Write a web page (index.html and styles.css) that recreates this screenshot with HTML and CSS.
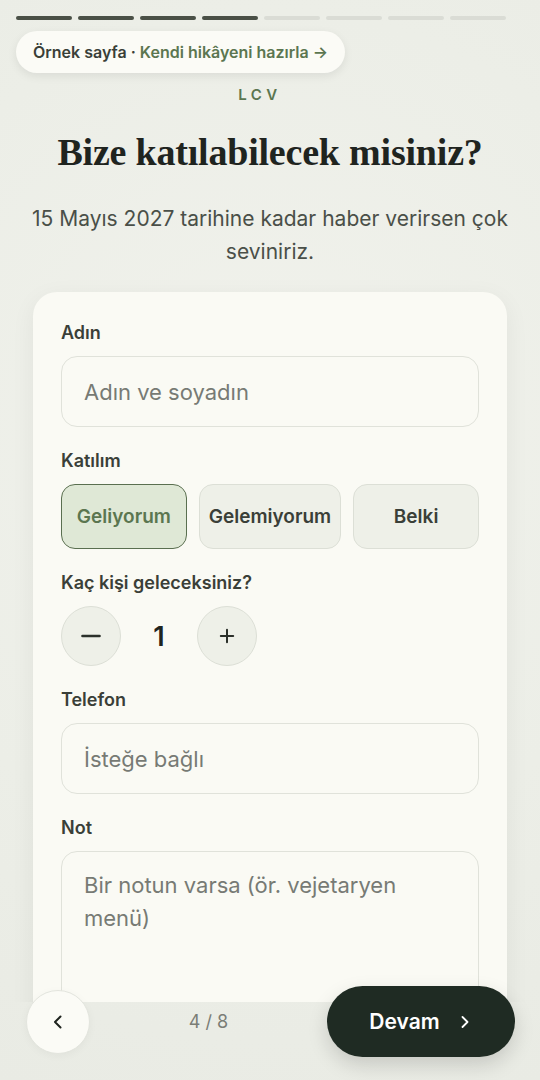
FILE: index.html
```html
<!DOCTYPE html>
<html lang="tr">
<head>
    <meta charset="UTF-8">
    <meta name="viewport" content="width=device-width, initial-scale=1.0">
    <title>LCV</title>
    <link rel="stylesheet" href="styles.css">
</head>
<body>
    <div class="screen">
        <div class="scroll">
            <div class="progress">
                <span class="seg done"></span>
                <span class="seg done"></span>
                <span class="seg done"></span>
                <span class="seg done"></span>
                <span class="seg"></span>
                <span class="seg"></span>
                <span class="seg"></span>
                <span class="seg"></span>
            </div>

            <div class="pill-row">
                <a class="pill" href="#">Örnek sayfa · <span class="pill-link">Kendi hikâyeni hazırla →</span></a>
            </div>

            <div class="eyebrow">LCV</div>
            <h1>Bize katılabilecek misiniz?</h1>
            <p class="lead">15 Mayıs 2027 tarihine kadar haber verirsen çok seviniriz.</p>

            <form class="card">
                <div class="field">
                    <label for="name">Adın</label>
                    <input type="text" id="name" placeholder="Adın ve soyadın">
                </div>

                <div class="field">
                    <label>Katılım</label>
                    <div class="choices">
                        <button type="button" class="choice selected">Geliyorum</button>
                        <button type="button" class="choice">Gelemiyorum</button>
                        <button type="button" class="choice">Belki</button>
                    </div>
                </div>

                <div class="field">
                    <label>Kaç kişi geleceksiniz?</label>
                    <div class="stepper">
                        <button type="button" class="step">
                            <svg width="20" height="20" viewBox="0 0 20 20"><path d="M1.5 10h17" stroke="#2b302a" stroke-width="2.6" stroke-linecap="round"/></svg>
                        </button>
                        <span class="count">1</span>
                        <button type="button" class="step">
                            <svg width="16" height="16" viewBox="0 0 16 16"><path d="M8 1.8v12.4M1.8 8h12.4" stroke="#2b302a" stroke-width="2" stroke-linecap="round"/></svg>
                        </button>
                    </div>
                </div>

                <div class="field">
                    <label for="phone">Telefon</label>
                    <input type="tel" id="phone" placeholder="İsteğe bağlı">
                </div>

                <div class="field">
                    <label for="note">Not</label>
                    <textarea id="note" rows="5" placeholder="Bir notun varsa (ör. vejetaryen menü)"></textarea>
                </div>
            </form>
        </div>

        <!-- bottom nav floats over the form -->
        <div class="nav">
            <button type="button" class="back">
                <svg width="18" height="18" viewBox="0 0 18 18"><path d="M11.5 3.5L6 9l5.5 5.5" fill="none" stroke="#1e231f" stroke-width="2" stroke-linecap="round" stroke-linejoin="round"/></svg>
            </button>
            <span class="pager">4 / 8</span>
            <button type="button" class="next">
                Devam
                <svg width="16" height="16" viewBox="0 0 16 16"><path d="M5.5 3l5 5-5 5" fill="none" stroke="#ffffff" stroke-width="1.8" stroke-linecap="round" stroke-linejoin="round"/></svg>
            </button>
        </div>
    </div>
</body>
</html>
```

FILE: styles.css
```css
body {
    margin: 0;
    font-family: Inter, "Noto Sans", sans-serif;
    background-color: #eceee7;
    color: #2b302a;
}
.screen {
    position: relative;
    width: 540px;
    height: 1080px;
    overflow: hidden;
    background: radial-gradient(circle at 50% 40%, #f1f2ec 0%, #eceee7 60%, #e9ebe4 100%);
}
.scroll {
    height: 1002px;
    overflow: hidden;
}
.progress {
    display: flex;
    gap: 6px;
    padding: 16px 34px 0 16px;
}
.seg {
    flex: 1;
    height: 4px;
    border-radius: 2px;
    background-color: #dadcd5;
}
.seg.done {
    background-color: #4a5046;
}
.pill-row {
    padding: 11px 16px 0;
}
.pill {
    display: inline-block;
    padding: 0 17px;
    height: 42px;
    line-height: 42px;
    border-radius: 21px;
    background-color: #fbfbf6;
    box-shadow: 0 3px 10px rgba(0,0,0,0.08);
    font-size: 16px;
    font-weight: 600;
    color: #3a3f38;
    text-decoration: none;
}
.pill-link {
    color: #5b7650;
}
.eyebrow {
    margin-top: 12px;
    padding-right: 20px;
    text-align: center;
    font-size: 15px;
    font-weight: 600;
    letter-spacing: 0.3em;
    color: #5b7650;
}
h1 {
    margin: 24px 0 0;
    text-align: center;
    font-family: "Liberation Serif", "DejaVu Serif", serif;
    font-size: 38px;
    font-weight: bold;
    line-height: 48px;
    color: #1f241f;
    letter-spacing: -0.2px;
}
.lead {
    margin: 26px 30px 0;
    text-align: center;
    font-size: 21px;
    line-height: 33px;
    color: #4a4f48;
}
.card {
    margin: 24px 33px 0;
    padding: 29px 28px 40px;
    background-color: #fafaf4;
    border-radius: 24px;
    box-shadow: 0 6px 24px rgba(0,0,0,0.06);
}
.field {
    margin-bottom: 22px;
}
label {
    display: block;
    margin-bottom: 11px;
    font-size: 18px;
    font-weight: 600;
    line-height: 24px;
    color: #3a3f38;
}
input, textarea {
    display: block;
    width: 100%;
    box-sizing: border-box;
    padding: 0 22px;
    height: 71px;
    border: 1px solid #e0e2da;
    border-radius: 16px;
    background-color: #fafaf4;
    font-family: inherit;
    font-size: 22px;
    color: #2b302a;
}
textarea {
    height: 180px;
    padding: 17px 22px;
    line-height: 33px;
    resize: none;
}
input::placeholder, textarea::placeholder {
    color: #777a74;
}
.choices {
    display: flex;
    gap: 12px;
}
.choice {
    flex: 1 1 0;
    height: 65px;
    padding: 0 9px;
    border: 1px solid #dcdfd6;
    border-radius: 14px;
    background-color: #eef0e8;
    font-family: inherit;
    font-size: 19px;
    font-weight: 600;
    color: #3a3f38;
}
.choice.selected {
    background-color: #dfe8d6;
    border-color: #5a6f50;
    color: #5b7650;
}
.stepper {
    display: flex;
    align-items: center;
}
.step {
    width: 60px;
    height: 60px;
    border-radius: 50%;
    border: 1px solid #dcdfd6;
    background-color: #eef0e8;
    display: flex;
    align-items: center;
    justify-content: center;
    padding: 0;
}
.count {
    width: 76px;
    text-align: center;
    font-size: 27px;
    font-weight: 600;
    color: #1f241f;
}
.nav {
    position: absolute;
    left: 26px;
    right: 25px;
    bottom: 23px;
    display: flex;
    align-items: center;
}
.back {
    width: 64px;
    height: 64px;
    border-radius: 50%;
    border: 1px solid #e3e5de;
    background-color: #fbfbf6;
    box-shadow: 0 2px 8px rgba(0,0,0,0.04);
    display: flex;
    align-items: center;
    justify-content: center;
    padding: 0;
}
.pager {
    flex: 1;
    text-align: center;
    font-size: 18px;
    color: #7a7d76;
}
.next {
    width: 188px;
    height: 71px;
    border: none;
    border-radius: 36px;
    background-color: #1f2b23;
    box-shadow: 0 8px 20px rgba(0,0,0,0.15);
    color: #ffffff;
    font-family: inherit;
    font-size: 21px;
    font-weight: 600;
    display: flex;
    align-items: center;
    justify-content: center;
    gap: 17px;
    padding: 0;
}
```
